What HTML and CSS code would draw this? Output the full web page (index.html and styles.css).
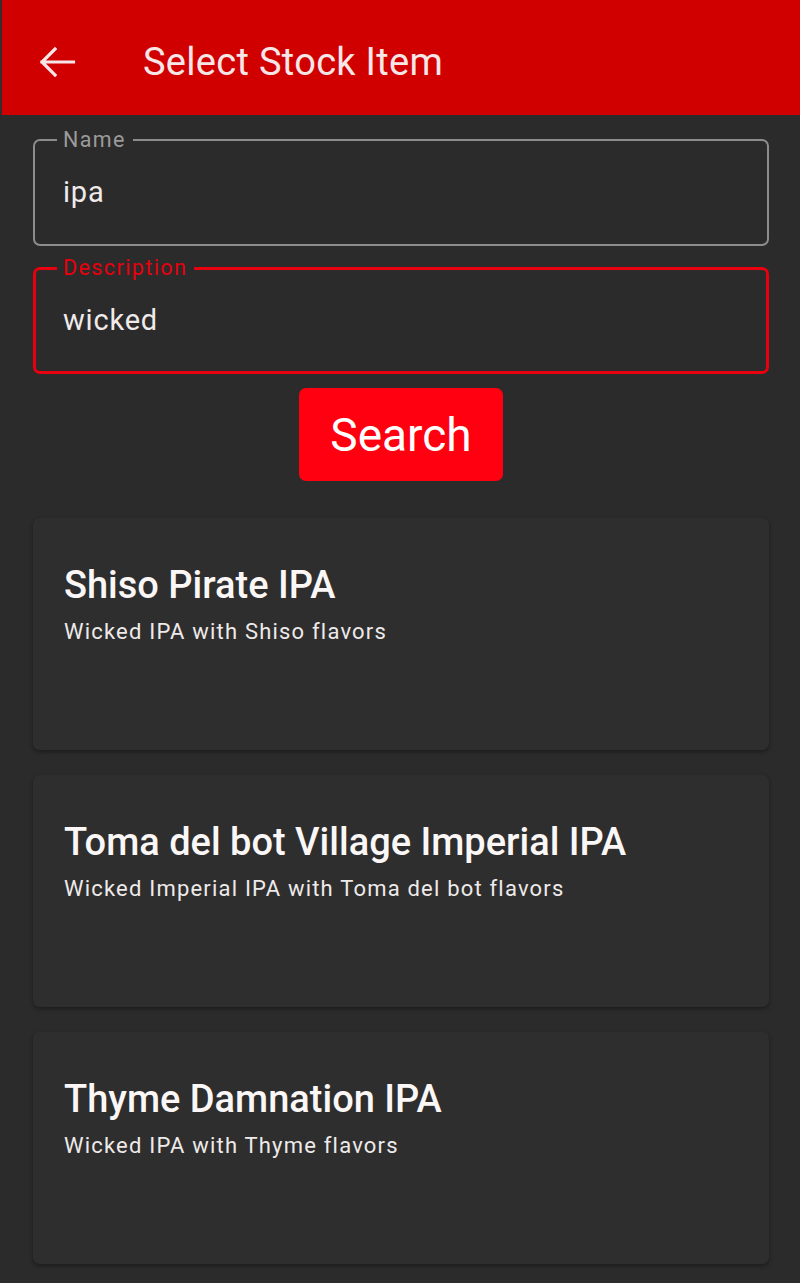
FILE: index.html
```html
<!DOCTYPE html>
<html>
<head>
<meta charset="utf-8">
<link rel="stylesheet" href="styles.css">
</head>
<body>
<header class="appbar">
  <svg class="back" viewBox="0 0 38 32" width="38" height="32"><path d="M35.5 16H4M17 3L4 16l13 13" fill="none" stroke="currentColor" stroke-width="3.2" stroke-linecap="square"/></svg>
  <h1 class="title">Select Stock Item</h1>
</header>
<main class="content">
  <fieldset class="field">
    <legend class="label">Name</legend>
    <div class="value">ipa</div>
  </fieldset>
  <fieldset class="field focused">
    <legend class="label">Description</legend>
    <div class="value">wicked</div>
  </fieldset>
  <div class="actions"><button class="search">Search</button></div>
  <section class="list">
    <article class="card">
      <h2 class="card-title">Shiso Pirate IPA</h2>
      <p class="card-sub">Wicked IPA with Shiso flavors</p>
    </article>
    <article class="card">
      <h2 class="card-title">Toma del bot Village Imperial IPA</h2>
      <p class="card-sub">Wicked Imperial IPA with Toma del bot flavors</p>
    </article>
    <article class="card">
      <h2 class="card-title">Thyme Damnation IPA</h2>
      <p class="card-sub">Wicked IPA with Thyme flavors</p>
    </article>
  </section>
</main>
</body>
</html>
```
FILE: styles.css
```css
* { box-sizing: border-box; }
html, body { margin: 0; padding: 0; }
body {
  background: #2b2b2b;
  font-family: Roboto, "Noto Sans", sans-serif;
  color: #f2eeee;
  width: 800px;
  height: 1283px;
  overflow: hidden;
}
.appbar {
  height: 115px;
  background: #d10000;
  border-left: 2px solid #3a2a2a;
  display: flex;
  align-items: center;
  padding-left: 36px;
  padding-top: 9px;
  color: #f6e6e8;
}
.back { display: block; margin-right: 67px; }
.title {
  margin: 0;
  font-weight: 400;
  font-size: 38px;
  letter-spacing: 0.3px;
}
.content {
  padding: 13px 31px 0 33px;
}
.field {
  margin: 0 0 10px 0;
  border: 2px solid #8c8c8c;
  border-radius: 7px;
  height: 118px;
  padding: 0 28px;
}
.field .label {
  font-size: 21.5px;
  color: #9c9a9a;
  padding: 0 7px 0 6px;
  margin-left: -6px;
  line-height: 24px;
  letter-spacing: 1.4px;
}
.field .value {
  font-size: 29px;
  line-height: 36px;
  color: #f0eaea;
  margin-top: 22px;
  letter-spacing: 0.8px;
}
.field.focused { border-color: #e8000e; border-width: 3px; }
.field.focused .label { color: #e8000e; margin-left: -7px; }
.field.focused .value { margin-left: -1px; }
.actions { display: flex; justify-content: center; margin-top: 14px; }
.search {
  background: #ff0010;
  color: #fff;
  border: none;
  border-radius: 7px;
  width: 204px;
  height: 93px;
  font-family: Roboto, sans-serif;
  font-size: 46px;
  padding: 0;
}
.list { margin-top: 37px; display: flex; flex-direction: column; gap: 25px; }
.card {
  background: #2e2e2e;
  border-radius: 7px;
  height: 232px;
  padding: 44px 31px;
  box-shadow: 0 2px 4px rgba(0,0,0,0.35);
}
.card-title {
  margin: 0;
  font-size: 38px;
  font-weight: 500;
  line-height: 46px;
  color: #fbf7f7;
}
.card-sub {
  margin: 9.5px 0 0;
  font-size: 22px;
  line-height: 28px;
  color: #eeeaea;
  letter-spacing: 1.2px;
}
```
